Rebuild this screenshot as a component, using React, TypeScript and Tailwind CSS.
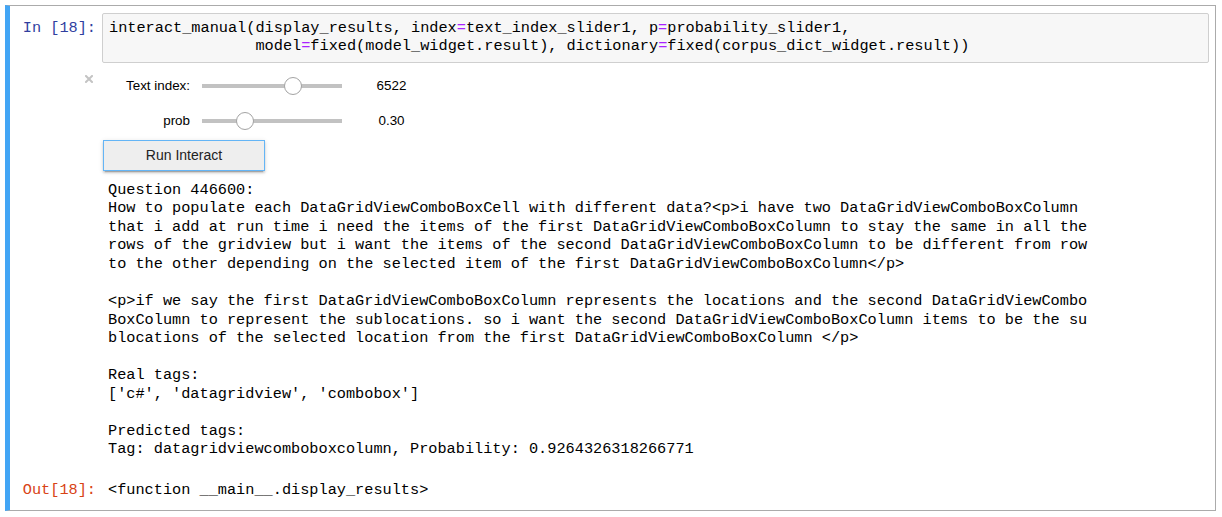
import React from "react";

const Eq = () => <span className="text-[#aa22ff]">=</span>;

function SliderRow({ label, value, pos }: { label: string; value: string; pos: number }) {
  return (
    <div className="h-[35px] flex items-center font-['Liberation_Sans',Arial,sans-serif] text-[13.4px] text-black">
      <div className="w-[88px] text-right">{label}</div>
      <div className="ml-[12px] w-[140px] h-[4px] bg-[#c2c2c2] relative">
        <div
          className="absolute top-[-7px] w-[18px] h-[18px] rounded-full bg-white border border-[#a3a3a3]"
          style={{ left: pos }}
        />
      </div>
      <div className="ml-[10px] w-[79px] text-center">{value}</div>
    </div>
  );
}

const outputText = `Question 446600:
How to populate each DataGridViewComboBoxCell with different data?<p>i have two DataGridViewComboBoxColumn
that i add at run time i need the items of the first DataGridViewComboBoxColumn to stay the same in all the
rows of the gridview but i want the items of the second DataGridViewComboBoxColumn to be different from row
to the other depending on the selected item of the first DataGridViewComboBoxColumn</p>

<p>if we say the first DataGridViewComboBoxColumn represents the locations and the second DataGridViewCombo
BoxColumn to represent the sublocations. so i want the second DataGridViewComboBoxColumn items to be the su
blocations of the selected location from the first DataGridViewComboBoxColumn </p>

Real tags:
['c#', 'datagridview', 'combobox']

Predicted tags:
Tag: datagridviewcomboboxcolumn, Probability: 0.9264326318266771`;

export default function App() {
  return (
    <div className="w-[1222px] h-[517px] bg-white pt-[5px] pl-[5px]">
      <div className="w-[1211px] h-[506px] border border-[#ababab] border-l-[5px] border-l-[#42a5f5] pt-[7px] pr-[6px] flex flex-col">
        {/* input */}
        <div className="flex">
          <div className="w-[92px] shrink-0 text-right pr-[6px] pt-[6px] text-[#303f9f] font-['Liberation_Mono','Courier_New',monospace] text-[15.25px] leading-[18.4px] whitespace-pre">
            In [18]:
          </div>
          <div className="flex-1 border border-[#cfcfcf] bg-[#f7f7f7] rounded-[2px] pt-[5px] pb-[6px] pl-[6px] font-['Liberation_Mono','Courier_New',monospace] text-[15.25px] leading-[18.4px] text-black whitespace-pre">
            <div>
              interact_manual(display_results, index<Eq />text_index_slider1, p<Eq />probability_slider1,
            </div>
            <div>
              {"                "}model<Eq />fixed(model_widget.result), dictionary<Eq />fixed(corpus_dict_widget.result))
            </div>
          </div>
        </div>

        {/* widgets */}
        <div className="flex mt-[6px]">
          <div className="w-[92px] shrink-0 flex justify-end pr-[9px] pt-[6.5px]">
            <svg width="8" height="8" viewBox="0 0 8 8">
              <path d="M1 1 L7 7 M7 1 L1 7" stroke="#c4c4c4" strokeWidth="2" strokeLinecap="square" />
            </svg>
          </div>
          <div className="flex flex-col">
            <SliderRow label="Text index:" value="6522" pos={82} />
            <SliderRow label="prob" value="0.30" pos={34} />
            <button className="ml-[1px] mt-[1px] w-[162px] h-[31px] bg-[#eeeeee] border border-[#64b5f6] text-[#222] font-['Liberation_Sans',Arial,sans-serif] text-[14px] shadow-[0_2px_2px_0_rgba(0,0,0,0.14),0_3px_1px_-2px_rgba(0,0,0,0.2),0_1px_5px_0_rgba(0,0,0,0.12)]">
              Run Interact
            </button>
          </div>
        </div>

        {/* printed output */}
        <div className="flex mt-[10px]">
          <div className="w-[92px] shrink-0" />
          <pre className="pl-[6px] font-['Liberation_Mono','Courier_New',monospace] text-[15.25px] leading-[18.55px] text-black">
            {outputText}
          </pre>
        </div>

        {/* Out prompt */}
        <div className="flex mt-[22px]">
          <div className="w-[92px] shrink-0 text-right pr-[6px] text-[#d84315] font-['Liberation_Mono','Courier_New',monospace] text-[15.25px] leading-[18.5px] whitespace-pre">
            Out[18]:
          </div>
          <pre className="pl-[6px] font-['Liberation_Mono','Courier_New',monospace] text-[15.25px] leading-[18.5px] text-black">
            {"<function __main__.display_results>"}
          </pre>
        </div>
      </div>
    </div>
  );
}
